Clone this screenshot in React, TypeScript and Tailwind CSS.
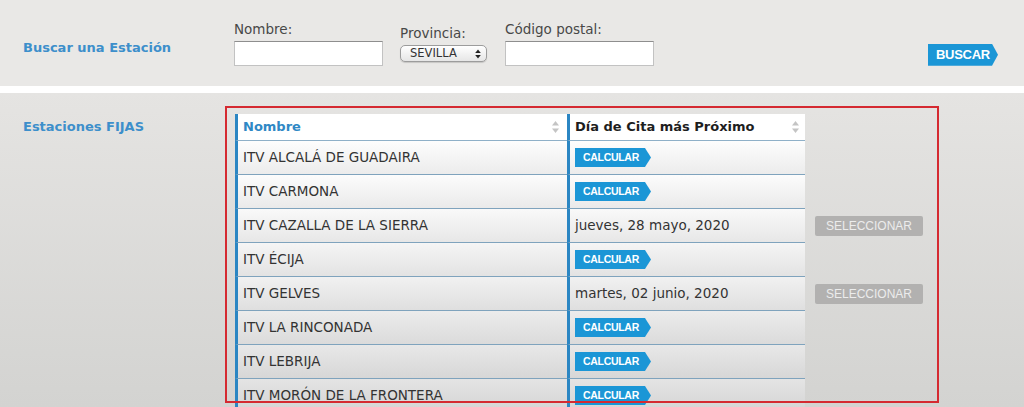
const stations = [
  { name: "ITV ALCALÁ DE GUADAIRA", date: null, tone: "from-[#fdfdfd] to-[#ececec]" },
  { name: "ITV CARMONA", date: null, tone: "from-[#fcfcfc] to-[#eaeaea]" },
  { name: "ITV CAZALLA DE LA SIERRA", date: "jueves, 28 mayo, 2020", tone: "from-[#f9f9f9] to-[#e7e7e7]" },
  { name: "ITV ÉCIJA", date: null, tone: "from-[#f5f5f5] to-[#e3e3e3]" },
  { name: "ITV GELVES", date: "martes, 02 junio, 2020", tone: "from-[#f1f1f1] to-[#dfdfdf]" },
  { name: "ITV LA RINCONADA", date: null, tone: "from-[#ececec] to-[#dbdbdb]" },
  { name: "ITV LEBRIJA", date: null, tone: "from-[#e8e8e8] to-[#d7d7d7]" },
  { name: "ITV MORÓN DE LA FRONTERA", date: null, tone: "from-[#e4e4e4] to-[#d4d4d4]" },
];

const SortIcon = () => (
  <svg width="9" height="14" viewBox="0 0 9 14" className="shrink-0">
    <path d="M4.5 1 L8 5.5 L1 5.5 Z" fill="#c4c4c4" />
    <path d="M4.5 13 L8 8.5 L1 8.5 Z" fill="#c4c4c4" />
  </svg>
);

const ArrowButton = ({ label, className }: { label: string; className: string }) => (
  <span
    className={`inline-flex items-center bg-[#1b96d6] text-white font-['Liberation_Sans',Arial,sans-serif] font-bold tracking-[-0.3px] [clip-path:polygon(0_0,calc(100%-6px)_0,100%_50%,calc(100%-6px)_100%,0_100%)] ${className}`}
  >
    {label}
  </span>
);

export default function App() {
  return (
    <div className="w-[1024px] h-[407px] overflow-hidden bg-white font-['DejaVu_Sans',Verdana,sans-serif]">
      {/* search band */}
      <div className="h-[86px] bg-[#e9e8e6] flex items-start">
        <div className="w-[234px] pl-[23px] pt-[39px] text-[13px] font-bold text-[#3d8fcb] leading-[18px]">
          Buscar una Estación
        </div>
        <div className="flex flex-col pt-[21px] w-[149px]">
          <label className="text-[13.5px] leading-[16px] text-[#484848]">Nombre:</label>
          <input className="mt-[4px] h-[25px] w-[149px] bg-white border border-[#c2c2c2] border-t-[#8e8e8e] outline-none" />
        </div>
        <div className="flex flex-col pt-[25px] ml-[17px]">
          <label className="text-[13.5px] leading-[16px] text-[#484848]">Provincia:</label>
          <div className="mt-[4px] h-[17px] w-[87px] rounded-[5px] border border-[#9c9c9c] bg-gradient-to-b from-white to-[#e6e6e6] flex items-center justify-between pl-[9px] pr-[5px] shadow-[0_1px_1px_rgba(0,0,0,0.15)]">
            <span className="text-[11.5px] leading-none text-[#333]">SEVILLA</span>
            <svg width="6" height="10" viewBox="0 0 6 10">
              <path d="M3 0.5 L5.8 4 L0.2 4 Z" fill="#222" />
              <path d="M3 9.5 L5.8 6 L0.2 6 Z" fill="#222" />
            </svg>
          </div>
        </div>
        <div className="flex flex-col pt-[21px] ml-[18px] w-[149px]">
          <label className="text-[13.5px] leading-[16px] text-[#484848]">Código postal:</label>
          <input className="mt-[4px] h-[25px] w-[149px] bg-white border border-[#c2c2c2] border-t-[#8e8e8e] outline-none" />
        </div>
        <div className="ml-auto mr-[26px] pt-[42px]">
          <ArrowButton label="BUSCAR" className="h-[22px] w-[70px] pl-[8px] text-[13px]" />
        </div>
      </div>

      <div className="h-[7px] bg-white" />

      {/* stations */}
      <div className="relative h-[314px] flex bg-gradient-to-b from-[#e5e4e2] to-[#d3d3d1]">
        <div className="w-[235px] pl-[23px] pt-[25px] text-[13px] font-bold text-[#3d8fcb] leading-[18px]">
          Estaciones FIJAS
        </div>

        <div className="pt-[21px] flex flex-col">
          <div className="flex">
            <div className="w-[332px] h-[27px] bg-white border-l-[3px] border-[#2b86c3] border-b border-b-[#8fb0c8] flex items-center justify-between pl-[5px] pr-[7px]">
              <span className="text-[13px] font-bold text-[#2f88c5]">Nombre</span>
              <SortIcon />
            </div>
            <div className="w-[238px] h-[27px] bg-white border-l-[3px] border-[#2b86c3] border-b border-b-[#8fb0c8] flex items-center justify-between pl-[5px] pr-[5px]">
              <span className="text-[13px] font-bold text-[#1e1e1e]">Día de Cita más Próximo</span>
              <SortIcon />
            </div>
          </div>

          {stations.map((s) => (
            <div key={s.name} className="flex">
              <div
                className={`w-[332px] h-[34px] bg-gradient-to-b ${s.tone} border-l-[3px] border-[#2b86c3] border-b border-b-[#7fa3bd] flex items-center pl-[5px]`}
              >
                <span className="text-[13.5px] text-[#333]">{s.name}</span>
              </div>
              <div
                className={`w-[238px] h-[34px] bg-gradient-to-b ${s.tone} border-l-[3px] border-[#2b86c3] border-b border-b-[#7fa3bd] flex items-center pl-[5px]`}
              >
                {s.date ? (
                  <span className="text-[13.5px] text-[#333]">{s.date}</span>
                ) : (
                  <ArrowButton label="CALCULAR" className="h-[19px] w-[76px] pl-[8px] text-[10.5px]" />
                )}
              </div>
              <div className="flex items-center pl-[10px]">
                {s.date && (
                  <span className="h-[20px] w-[108px] rounded-[2px] bg-[#b2b1b0] text-[#ececec] text-[12px] font-['Liberation_Sans',Arial,sans-serif] flex items-center justify-center">
                    SELECCIONAR
                  </span>
                )}
              </div>
            </div>
          ))}
        </div>

        {/* highlight frame */}
        <div className="absolute left-[225px] top-[13px] w-[714px] h-[297px] border-2 border-[#d52a31] pointer-events-none" />
      </div>
    </div>
  );
}
